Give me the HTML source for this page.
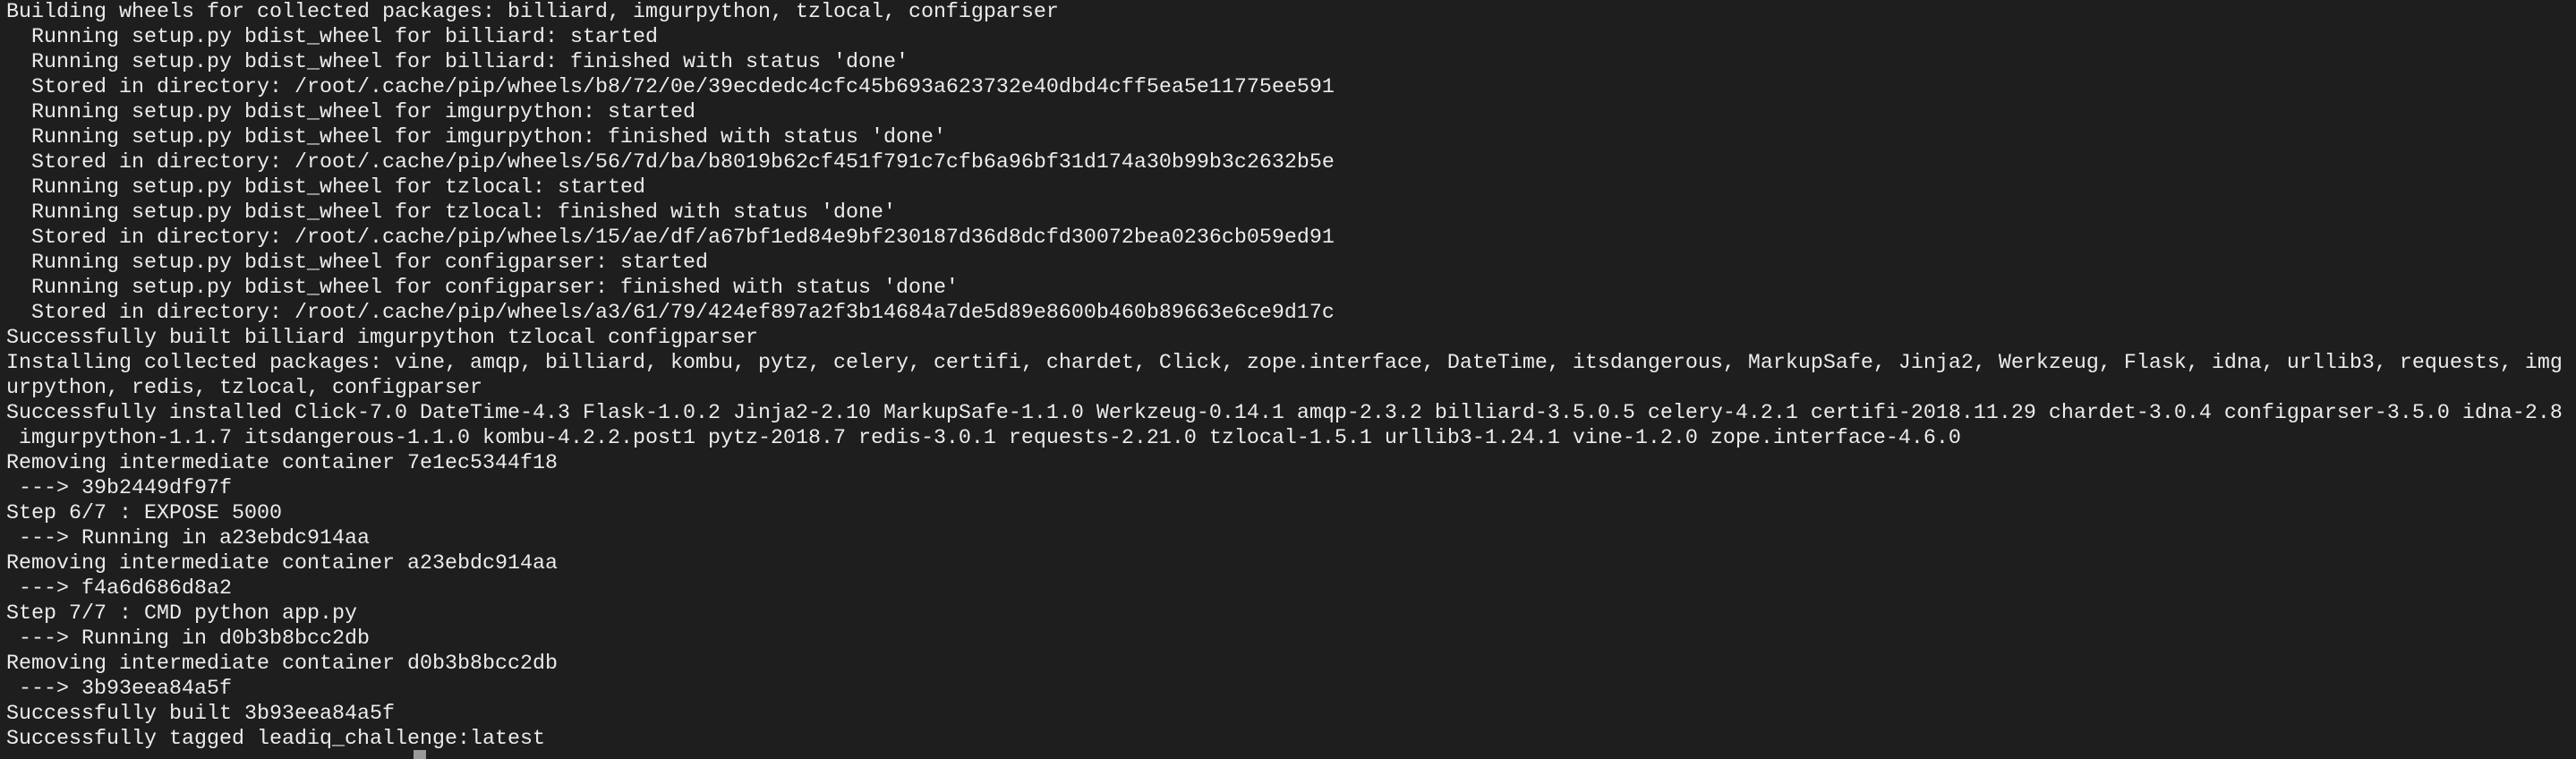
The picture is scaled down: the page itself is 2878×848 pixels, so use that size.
<!DOCTYPE html>
<html><head><meta charset="utf-8"><style>
html,body{margin:0;padding:0;background:#1e1e1e;width:2878px;height:844px;overflow:hidden}
pre{margin:0;padding:0 0 0 7px;font-family:"Liberation Mono",monospace;font-size:23.33px;line-height:28px;color:#ececec;white-space:pre}
.cur{position:absolute;left:462px;top:838px;width:14px;height:10px;background:#9a9a9a}
</style></head><body><pre>Building wheels for collected packages: billiard, imgurpython, tzlocal, configparser
  Running setup.py bdist_wheel for billiard: started
  Running setup.py bdist_wheel for billiard: finished with status 'done'
  Stored in directory: /root/.cache/pip/wheels/b8/72/0e/39ecdedc4cfc45b693a623732e40dbd4cff5ea5e11775ee591
  Running setup.py bdist_wheel for imgurpython: started
  Running setup.py bdist_wheel for imgurpython: finished with status 'done'
  Stored in directory: /root/.cache/pip/wheels/56/7d/ba/b8019b62cf451f791c7cfb6a96bf31d174a30b99b3c2632b5e
  Running setup.py bdist_wheel for tzlocal: started
  Running setup.py bdist_wheel for tzlocal: finished with status 'done'
  Stored in directory: /root/.cache/pip/wheels/15/ae/df/a67bf1ed84e9bf230187d36d8dcfd30072bea0236cb059ed91
  Running setup.py bdist_wheel for configparser: started
  Running setup.py bdist_wheel for configparser: finished with status 'done'
  Stored in directory: /root/.cache/pip/wheels/a3/61/79/424ef897a2f3b14684a7de5d89e8600b460b89663e6ce9d17c
Successfully built billiard imgurpython tzlocal configparser
Installing collected packages: vine, amqp, billiard, kombu, pytz, celery, certifi, chardet, Click, zope.interface, DateTime, itsdangerous, MarkupSafe, Jinja2, Werkzeug, Flask, idna, urllib3, requests, img
urpython, redis, tzlocal, configparser
Successfully installed Click-7.0 DateTime-4.3 Flask-1.0.2 Jinja2-2.10 MarkupSafe-1.1.0 Werkzeug-0.14.1 amqp-2.3.2 billiard-3.5.0.5 celery-4.2.1 certifi-2018.11.29 chardet-3.0.4 configparser-3.5.0 idna-2.8
 imgurpython-1.1.7 itsdangerous-1.1.0 kombu-4.2.2.post1 pytz-2018.7 redis-3.0.1 requests-2.21.0 tzlocal-1.5.1 urllib3-1.24.1 vine-1.2.0 zope.interface-4.6.0
Removing intermediate container 7e1ec5344f18
 ---&gt; 39b2449df97f
Step 6/7 : EXPOSE 5000
 ---&gt; Running in a23ebdc914aa
Removing intermediate container a23ebdc914aa
 ---&gt; f4a6d686d8a2
Step 7/7 : CMD python app.py
 ---&gt; Running in d0b3b8bcc2db
Removing intermediate container d0b3b8bcc2db
 ---&gt; 3b93eea84a5f
Successfully built 3b93eea84a5f
Successfully tagged leadiq_challenge:latest
</pre><div class="cur"></div></body></html>
